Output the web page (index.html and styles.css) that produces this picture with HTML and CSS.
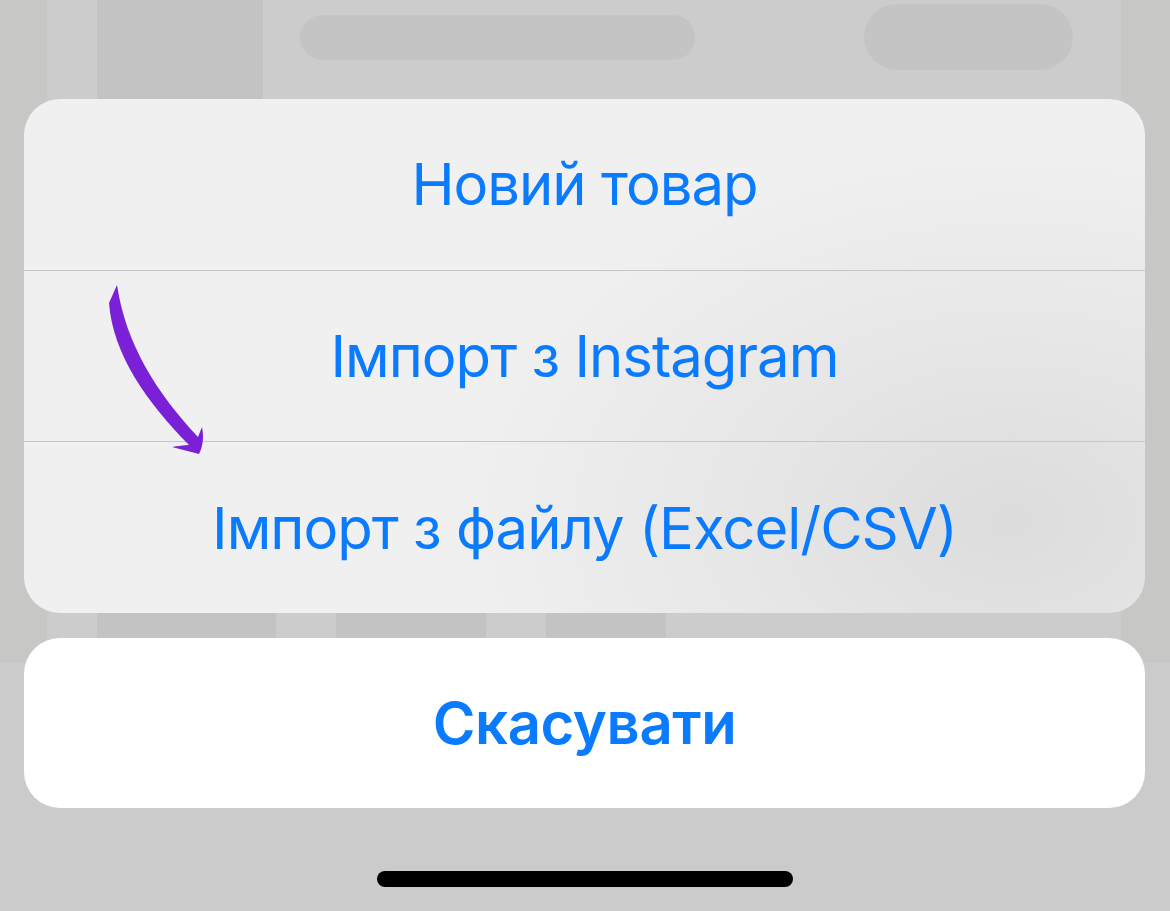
FILE: index.html
```html
<!DOCTYPE html>
<html lang="uk">
<head>
<meta charset="utf-8">
<title>Action sheet</title>
<link rel="stylesheet" href="styles.css">
</head>
<body>
<div class="screen">
  <div class="backdrop">
    <div class="panel">
      <div class="top-row">
        <div class="block block-tall"></div>
        <div class="pill pill-wide"></div>
        <div class="pill pill-short"></div>
      </div>
      <div class="bottom-row">
        <div class="block b1"></div>
        <div class="block b2"></div>
        <div class="block b3"></div>
      </div>
    </div>
  </div>
  <div class="overlay">
    <div class="sheet">
      <div class="action">Новий товар</div>
      <div class="action">Імпорт з Instagram</div>
      <div class="action">Імпорт з файлу (Excel/CSV)</div>
    </div>
    <div class="cancel">Скасувати</div>
    <div class="home-indicator"></div>
  </div>
  <svg class="arrow" width="1170" height="911" viewBox="0 0 1170 911">
    <path d="M117,285 C126,345 157,393 198,437 L202,427 C204,437 203,446 199,454 L172,447 C178,446 184,445 189,445 C147,402 113,355 109,303 Z" fill="#7a20d6"/>
  </svg>
</div>
</body>
</html>
```
FILE: styles.css
```css
html, body {
  margin: 0;
  padding: 0;
}
body {
  background: #cbcbcb;
  font-family: Inter, "Noto Sans", "Liberation Sans", sans-serif;
}
.screen {
  position: relative;
  width: 1170px;
  height: 911px;
  overflow: hidden;
  background: #cbcbcb;
}
.backdrop {
  height: 663px;
  background: #c7c7c5;
  padding: 0 49px 0 47px;
}
.panel {
  height: 663px;
  background: #cccccc;
  display: flex;
  flex-direction: column;
  justify-content: space-between;
}
.top-row {
  display: flex;
  align-items: flex-start;
  padding-left: 50px;
}
.block {
  background: #c3c3c3;
}
.block-tall {
  width: 166px;
  height: 120px;
}
.pill {
  background: #c4c4c4;
}
.pill-wide {
  width: 395px;
  height: 45px;
  border-radius: 23px;
  margin-left: 37px;
  margin-top: 15px;
}
.pill-short {
  width: 209px;
  height: 66px;
  border-radius: 33px;
  margin-left: 169px;
  margin-top: 4px;
}
.bottom-row {
  display: flex;
  padding-left: 50px;
  margin-bottom: 10px;
}
.bottom-row .block {
  height: 70px;
  border-radius: 16px;
}
.b1 { width: 179px; }
.b2 { width: 150px; margin-left: 60px; }
.b3 { width: 120px; margin-left: 60px; }

.overlay {
  position: absolute;
  inset: 0;
  padding: 99px 25px 0 24px;
  display: flex;
  flex-direction: column;
}
.sheet {
  height: 514px;
  border-radius: 36px;
  overflow: hidden;
  background: radial-gradient(ellipse 560px 380px at 88% 82%, #dcdcdc 0%, #e6e6e6 45%, #f0f0f0 100%);
  display: flex;
  flex-direction: column;
}
.action {
  flex: 1;
  display: flex;
  align-items: center;
  justify-content: center;
  color: #0a7aff;
  font-size: 58px;
  font-weight: 400;
  letter-spacing: -1px;
}
.action + .action {
  border-top: 1px solid #c6c6c6;
}
.cancel {
  margin-top: 25px;
  height: 170px;
  border-radius: 36px;
  background: #ffffff;
  display: flex;
  align-items: center;
  justify-content: center;
  color: #0a7aff;
  font-size: 58px;
  font-weight: 600;
  letter-spacing: -0.4px;
}
.home-indicator {
  align-self: center;
  margin-top: 63px;
  margin-left: 1px;
  width: 416px;
  height: 16px;
  border-radius: 8px;
  background: #000000;
}
.arrow {
  position: absolute;
  left: 0;
  top: 0;
  pointer-events: none;
}
```
